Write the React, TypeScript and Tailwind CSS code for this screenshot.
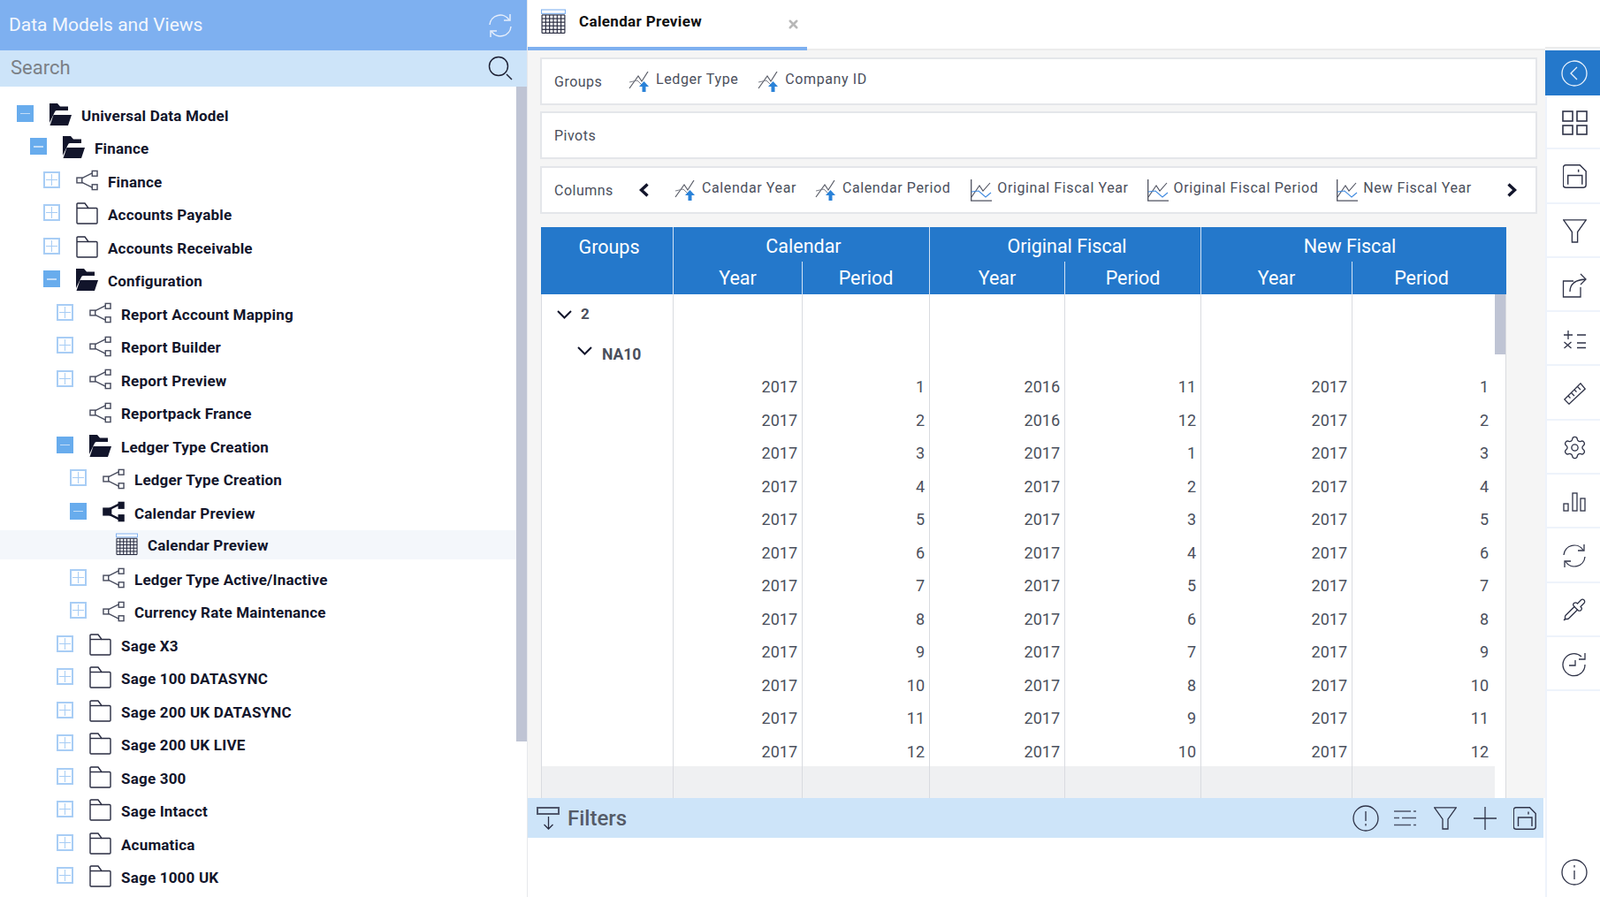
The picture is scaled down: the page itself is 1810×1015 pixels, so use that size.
import { Pipette, Settings, X } from "lucide-react";

type TreeIcon = "open" | "folder" | "share" | "shareSolid" | "grid";
type Toggle = "plus" | "minus" | "none";

type TreeRow = {
  label: string;
  depth: number;
  icon: TreeIcon;
  toggle: Toggle;
  selected?: boolean;
};

const treeRows: TreeRow[] = [
  { label: "Universal Data Model", depth: 0, icon: "open", toggle: "minus" },
  { label: "Finance", depth: 1, icon: "open", toggle: "minus" },
  { label: "Finance", depth: 2, icon: "share", toggle: "plus" },
  { label: "Accounts Payable", depth: 2, icon: "folder", toggle: "plus" },
  { label: "Accounts Receivable", depth: 2, icon: "folder", toggle: "plus" },
  { label: "Configuration", depth: 2, icon: "open", toggle: "minus" },
  { label: "Report Account Mapping", depth: 3, icon: "share", toggle: "plus" },
  { label: "Report Builder", depth: 3, icon: "share", toggle: "plus" },
  { label: "Report Preview", depth: 3, icon: "share", toggle: "plus" },
  { label: "Reportpack France", depth: 3, icon: "share", toggle: "none" },
  { label: "Ledger Type Creation", depth: 3, icon: "open", toggle: "minus" },
  { label: "Ledger Type Creation", depth: 4, icon: "share", toggle: "plus" },
  { label: "Calendar Preview", depth: 4, icon: "shareSolid", toggle: "minus" },
  { label: "Calendar Preview", depth: 5, icon: "grid", toggle: "none", selected: true },
  { label: "Ledger Type Active/Inactive", depth: 4, icon: "share", toggle: "plus" },
  { label: "Currency Rate Maintenance", depth: 4, icon: "share", toggle: "plus" },
  { label: "Sage X3", depth: 3, icon: "folder", toggle: "plus" },
  { label: "Sage 100 DATASYNC", depth: 3, icon: "folder", toggle: "plus" },
  { label: "Sage 200 UK DATASYNC", depth: 3, icon: "folder", toggle: "plus" },
  { label: "Sage 200 UK LIVE", depth: 3, icon: "folder", toggle: "plus" },
  { label: "Sage 300", depth: 3, icon: "folder", toggle: "plus" },
  { label: "Sage Intacct", depth: 3, icon: "folder", toggle: "plus" },
  { label: "Acumatica", depth: 3, icon: "folder", toggle: "plus" },
  { label: "Sage 1000 UK", depth: 3, icon: "folder", toggle: "plus" },
];

const dataRows = [
  [2017, 1, 2016, 11, 2017, 1],
  [2017, 2, 2016, 12, 2017, 2],
  [2017, 3, 2017, 1, 2017, 3],
  [2017, 4, 2017, 2, 2017, 4],
  [2017, 5, 2017, 3, 2017, 5],
  [2017, 6, 2017, 4, 2017, 6],
  [2017, 7, 2017, 5, 2017, 7],
  [2017, 8, 2017, 6, 2017, 8],
  [2017, 9, 2017, 7, 2017, 9],
  [2017, 10, 2017, 8, 2017, 10],
  [2017, 11, 2017, 9, 2017, 11],
  [2017, 12, 2017, 10, 2017, 12],
];

const bodyCols = "grid grid-cols-[149px_146px_144px_153px_154px_171px_161px]";
const cellLine = "border-r border-[#d9dbe0]";

function RefreshIcon({ className, width = 1.3 }: { className?: string; width?: number }) {
  return (
    <svg viewBox="0 0 28 28" fill="none" stroke="currentColor" strokeWidth={width} className={className}>
      <path d="M2 13A12 12 0 0 1 24 7.5" />
      <path d="M25 1v7h-7" />
      <path d="M26 15A12 12 0 0 1 4 20.5" />
      <path d="M3 27v-7h7" />
    </svg>
  );
}

function ShareIcon({ solid }: { solid?: boolean }) {
  return (
    <svg viewBox="0 0 26 24" className="h-[24px] w-[26px]" fill={solid ? "#12152b" : "#fff"} stroke={solid ? "#12152b" : "#4a4e60"} strokeWidth="1.5">
      <path d="M7 9.5 19 3.5M7 14.5 19 20.5" fill="none" strokeWidth={solid ? 2.5 : 1.5} />
      {solid ? (
        <>
          <rect x="1" y="8" width="9" height="8" />
          <rect x="19" y="1" width="6" height="7" />
          <rect x="19" y="16" width="6" height="7" />
        </>
      ) : (
        <>
          <rect x="1" y="9" width="6" height="6" />
          <rect x="19" y="1" width="6" height="6" />
          <rect x="19" y="17" width="6" height="6" />
        </>
      )}
    </svg>
  );
}

function FolderIcon() {
  return (
    <svg viewBox="0 0 25 25" className="h-[25px] w-[25px]" fill="none" stroke="#2a2d42" strokeWidth="1.4">
      <path d="M1 6.5V2a1 1 0 0 1 1-1h8l4 5.5h9a1 1 0 0 1 1 1V23a1 1 0 0 1-1 1H2a1 1 0 0 1-1-1z" />
      <path d="M1 6.5h13" />
    </svg>
  );
}

function OpenFolderIcon() {
  return (
    <svg viewBox="0 0 25 25" className="h-[25px] w-[25px]" fill="#12152b">
      <path d="M0 0h9l3 3.5h9V8H8q-1.5 0-2.2 2L0 22z" />
      <path d="M4.5 13H25l-4 12H.5z" />
    </svg>
  );
}

function GridIcon({ className }: { className: string }) {
  const lines = [];
  for (let i = 0; i <= 6; i++) {
    lines.push(<path key={`v${i}`} d={`M${1 + i * 4} 6V25`} />);
  }
  for (let i = 0; i <= 5; i++) {
    lines.push(<path key={`h${i}`} d={`M1 ${6 + i * 3.8}H25`} />);
  }
  return (
    <svg viewBox="0 0 26 26" className={className} fill="none">
      <rect x="0.5" y="0.5" width="25" height="4" fill="#fff" stroke="#7eb0f0" />
      <g stroke="#2a2d42" strokeWidth="1.1">{lines}</g>
    </svg>
  );
}

function TreeGlyph({ icon }: { icon: TreeIcon }) {
  if (icon === "open") return <OpenFolderIcon />;
  if (icon === "folder") return <FolderIcon />;
  if (icon === "share") return <ShareIcon />;
  if (icon === "shareSolid") return <ShareIcon solid />;
  return <GridIcon className="h-[26px] w-[26px]" />;
}

function ToggleBox({ toggle }: { toggle: Toggle }) {
  if (toggle === "none") return <span className="w-[19px]" />;
  if (toggle === "minus") {
    return (
      <span className="flex h-[19px] w-[19px] -translate-y-[2px] items-center justify-center bg-[#68aced]">
        <span className="h-[1.5px] w-[11px] bg-[#c3ddf7]" />
      </span>
    );
  }
  return (
    <span className="relative flex h-[19px] w-[19px] -translate-y-[2px] items-center justify-center border-2 border-[#a8cdf5] bg-white">
      <span className="h-px w-[13px] bg-[#a8cdf5]" />
      <span className="absolute h-[13px] w-px bg-[#a8cdf5]" />
    </span>
  );
}

function Sidebar() {
  return (
    <aside className="flex w-[597px] shrink-0 flex-col border-r border-[#e6e8ec] bg-white">
      <div className="flex h-[57px] items-center justify-between bg-[#7eb0f0] pl-[10px] pr-[16px]">
        <span className="text-[21px] text-[#f3f7fd]">Data Models and Views</span>
        <RefreshIcon className="h-[28px] w-[28px] text-[#e6eefb]" width={1.5} />
      </div>
      <div className="flex h-[41px] items-center justify-between bg-[#cde4f9] pb-[2px] pl-[12px] pr-[16px]">
        <span className="text-[22px] text-[#7b8086]">Search</span>
        <svg viewBox="0 0 28 28" className="h-[28px] w-[28px]" fill="none" stroke="#1c1f33" strokeWidth="1.4">
          <circle cx="12" cy="12" r="10.5" />
          <path d="M21 21l6 6" />
        </svg>
      </div>
      <div className="flex min-h-0 flex-1">
        <div className="min-w-0 flex-1 overflow-hidden pt-[13.5px]">
          {treeRows.map((row, i) => (
            <div
              key={i}
              className={`flex items-center ${row.selected ? "mb-[3.5px] mt-[1px] h-[33px] bg-[#f4f7fb]" : "h-[37.5px]"}`}
              style={{ paddingLeft: 19 + row.depth * 15 }}
            >
              <ToggleBox toggle={row.toggle} />
              <span className="ml-[18px] flex w-[25px] -translate-y-px items-center justify-center">
                <TreeGlyph icon={row.icon} />
              </span>
              <span className="ml-[11px] translate-y-px whitespace-nowrap text-[17px] font-bold tracking-[0.2px] text-[#12152b]">
                {row.label}
              </span>
            </div>
          ))}
        </div>
        <div className="w-[12px] shrink-0">
          <div className="h-[741px] bg-[#bfc4d4]" />
        </div>
      </div>
    </aside>
  );
}

function ArrowChartIcon() {
  return (
    <svg viewBox="0 0 24 23" className="h-[23px] w-[24px] shrink-0" fill="none">
      <path d="M1 19 11 5l4 6 7-11" stroke="#5a5d68" strokeWidth="1.2" />
      <path d="M1 12l9-2 8 8" stroke="#7d808a" strokeWidth="1" />
      <path d="M17.5 11l5.5 6h-3.5v6h-4v-6H12z" fill="#2a82d8" />
    </svg>
  );
}

function LineChartIcon() {
  return (
    <svg viewBox="0 0 24 25" className="h-[25px] w-[24px] shrink-0" fill="none">
      <path d="M.7 0v24.2H24" stroke="#4f5260" strokeWidth="1.3" />
      <path d="M1 20 10 7l4 6 8-9" stroke="#4f5260" strokeWidth="1.1" />
      <path d="M1 14l8-1 8 7 6-5" stroke="#3f8ae0" strokeWidth="1.1" />
    </svg>
  );
}

function Chip({ label, line }: { label: string; line?: boolean }) {
  return (
    <span className={`flex items-center ${line ? "gap-[6px]" : "gap-[7px]"}`}>
      {line ? <LineChartIcon /> : <ArrowChartIcon />}
      <span className="-translate-y-[2px] whitespace-nowrap text-[16px] tracking-[0.6px] text-[#4b4f5c]">{label}</span>
    </span>
  );
}

function FieldPanel({ label, children, labelClass }: { label: string; children?: React.ReactNode; labelClass?: string }) {
  return (
    <div className="flex h-[54px] items-center border-2 border-[#e4e6ea] bg-white pl-[14px]">
      <span className={`w-[85px] shrink-0 text-[16px] tracking-[0.5px] text-[#4b4f5c] ${labelClass ?? ""}`}>{label}</span>
      {children}
    </div>
  );
}

function Chevron({ left }: { left?: boolean }) {
  return (
    <svg viewBox="0 0 13 16" className="h-[16px] w-[13px] shrink-0" fill="none" stroke="#12152b" strokeWidth="3.4">
      <path d={left ? "M10.5 1.5 3.5 8l7 6.5" : "M2.5 1.5 9.5 8l-7 6.5"} />
    </svg>
  );
}

function HeaderCell({ label, className }: { label: string; className: string }) {
  return (
    <div className={`flex items-center justify-center border-[#d4e3f4] text-[21.5px] text-white ${className}`}>{label}</div>
  );
}

function DataTable() {
  return (
    <div className="ml-[15px] mt-[15px] w-[1092px] [font-family:'Liberation_Sans',Arial,sans-serif]">
      <div className="grid h-[76px] grid-cols-[150px_146px_144px_153px_154px_171px_174px] grid-rows-[39px_37px] bg-[#2478cb]">
        <HeaderCell label="Groups" className="row-span-2 items-start border-r pl-[5px] pt-[7px]" />
        <HeaderCell label="Calendar" className="col-span-2 border-r pl-[5px] pt-[5px]" />
        <HeaderCell label="Original Fiscal" className="col-span-2 border-r pl-[4px] pt-[5px]" />
        <HeaderCell label="New Fiscal" className="col-span-2 pr-[9px] pt-[5px]" />
        <HeaderCell label="Year" className="border-r pt-[2px]" />
        <HeaderCell label="Period" className="border-r pt-[2px]" />
        <HeaderCell label="Year" className="border-r pt-[2px]" />
        <HeaderCell label="Period" className="border-r pt-[2px]" />
        <HeaderCell label="Year" className="border-r pt-[2px]" />
        <HeaderCell label="Period" className="pr-[18px] pt-[2px]" />
      </div>
      <div className="flex h-[570px] overflow-hidden border-x border-[#d9dbe0] bg-white">
        <div className="w-[1078px] shrink-0">
          <div className={`${bodyCols} h-[45px]`}>
            <div className={`${cellLine} flex items-center pl-[17px] text-[17px] font-bold text-[#4a4f5c]`}>
              <svg viewBox="0 0 17 10" className="mr-[10px] h-[10px] w-[17px]" fill="none" stroke="#12152b" strokeWidth="2">
                <path d="M1 1l7.500 7.500L16 1" />
              </svg>
              2
            </div>
            <EmptyCells />
          </div>
          <div className={`${bodyCols} h-[41px]`}>
            <div className={`${cellLine} flex items-center pl-[40px] pt-[6px] text-[17.5px] font-bold text-[#4a4f5c]`}>
              <svg viewBox="0 0 17 10" className="mr-[11px] h-[10px] w-[17px] -translate-y-[5px]" fill="none" stroke="#12152b" strokeWidth="2">
                <path d="M1 1l7.500 7.500L16 1" />
              </svg>
              NA10
            </div>
            <EmptyCells />
          </div>
          {dataRows.map((row, i) => (
            <div key={i} className={`${bodyCols} h-[37.5px]`}>
              <div className={cellLine} />
              {row.map((value, j) => (
                <div
                  key={j}
                  className={`flex items-center justify-end text-[18px] text-[#4a4f5c] ${j === 5 ? "pr-[7px]" : `pr-[5px] ${cellLine}`}`}
                >
                  {value}
                </div>
              ))}
            </div>
          ))}
          <div className={`${bodyCols} relative -mt-[2px] h-[38px] bg-[#eff0f2]`}>
            <div className={cellLine} />
            <EmptyCells />
          </div>
        </div>
        <div className="w-[12px] shrink-0">
          <div className="h-[68px] bg-[#bfc4d4]" />
        </div>
      </div>
    </div>
  );
}

function EmptyCells() {
  return (
    <>
      <div className={cellLine} />
      <div className={cellLine} />
      <div className={cellLine} />
      <div className={cellLine} />
      <div className={cellLine} />
      <div />
    </>
  );
}

function SaveIcon({ className }: { className: string }) {
  return (
    <svg viewBox="0 0 26 26" className={className} fill="none" stroke="#2f3348" strokeWidth="1.4">
      <path d="M3 .8h15.500L25.200 7.500V22.500a2.700 2.700 0 0 1-2.700 2.700h-19.500a2.700 2.700 0 0 1-2.700-2.700v-19a2.700 2.700 0 0 1 2.700-2.700z" />
      <path d="M5.500 22V12h15.500v10M17 5.500v3" />
    </svg>
  );
}

function FunnelIcon({ className }: { className: string }) {
  return (
    <svg viewBox="0 0 26 26" className={className} fill="none" stroke="#2f3348" strokeWidth="1.3">
      <path d="M.7.800h24.600L16 14v11h-6V14z" />
    </svg>
  );
}

function FilterBar() {
  return (
    <div className="mr-[2px] flex h-[45px] items-center justify-between bg-[#cde4f9] pl-[10px] pr-[8px]">
      <div className="flex items-center">
        <svg viewBox="0 0 26 26" className="h-[26px] w-[26px]" fill="none" stroke="#4f566b">
          <rect x="1" y="1" width="24" height="7" strokeWidth="2" />
          <path d="M13.500 11v14M8.500 20l5 5 5-5" stroke="#2a2d42" strokeWidth="1.300" />
        </svg>
        <span className="ml-[9px] text-[24px] font-medium text-[#555b68]">Filters</span>
      </div>
      <div className="flex items-center text-[#2f3348]">
        <svg viewBox="0 0 30 30" className="h-[30px] w-[30px]" fill="none" stroke="currentColor" strokeWidth="1.3">
          <circle cx="15" cy="15" r="14" />
          <path d="M15 7v11M15 21v2.500" />
        </svg>
        <svg viewBox="0 0 25 18" className="ml-[17px] h-[18px] w-[25px]" fill="none" stroke="#4f566b" strokeWidth="1.500">
          <path d="M0 1h19M22 1h3M0 8.500h6M9 8.500h16M0 16.500h19M22 16.500h3" />
        </svg>
        <FunnelIcon className="ml-[20px] h-[26px] w-[26px]" />
        <svg viewBox="0 0 26 26" className="ml-[19px] h-[26px] w-[26px]" fill="none" stroke="currentColor" strokeWidth="1.3">
          <path d="M13 0v26M0 13h26" />
        </svg>
        <SaveIcon className="ml-[19px] h-[26px] w-[26px]" />
      </div>
    </div>
  );
}

function Rail() {
  const stroke = { fill: "none", stroke: "#2f3348", strokeWidth: 1.3 };
  const items = [
    <svg key="apps" viewBox="0 0 29 28" className="h-[28px] w-[29px]" fill="none" stroke="#2f3348" strokeWidth="1.6">
      <rect x="1" y="1" width="11" height="11" />
      <rect x="17" y="1" width="11" height="11" />
      <rect x="1" y="17" width="11" height="10" />
      <rect x="17" y="17" width="11" height="10" />
    </svg>,
    <SaveIcon key="save" className="h-[27px] w-[27px]" />,
    <FunnelIcon key="funnel" className="h-[27px] w-[27px]" />,
    <svg key="share" viewBox="0 0 28 28" className="h-[28px] w-[28px]" {...stroke}>
      <path d="M13 9H1.500V27H21V16" />
      <path d="M9 21c0-9 6-13.500 18-14" />
      <path d="M21 1l6 6-6 6" />
    </svg>,
    <svg key="calc" viewBox="0 0 26 22" className="h-[22px] w-[26px]" {...stroke}>
      <path d="M1 6h10M6 1v10M16 6h10M1.500 14l8 7M9.500 14l-8 7M16 15h10M16 20.500h10" />
    </svg>,
    <svg key="ruler" viewBox="0 0 25 25" className="h-[25px] w-[25px]" {...stroke}>
      <path d="M.8 19 19 .8 24.200 7 6 24.200z" />
      <path d="M5 15l2.500 2.500M8.500 11.500l3.500 3.500M12 8l2.500 2.500M15.500 4.500l3.500 3.500" />
    </svg>,
    <Settings key="gear" size={29} strokeWidth={1.1} color="#2f3348" />,
    <svg key="bars" viewBox="0 0 26 22" className="h-[22px] w-[26px]" {...stroke}>
      <rect x="1" y="13" width="5" height="8" />
      <rect x="11" y="1" width="5" height="20" />
      <rect x="20" y="7" width="5" height="14" />
    </svg>,
    <RefreshIcon key="refresh" className="h-[28px] w-[28px] text-[#2f3348]" />,
    <Pipette key="pipette" size={28} strokeWidth={1.1} color="#2f3348" />,
    <svg key="history" viewBox="0 0 28 28" className="h-[28px] w-[28px]" {...stroke}>
      <path d="M26 14A12.500 12.500 0 1 1 22 5" />
      <path d="M26 1v7h-7" />
      <path d="M15 9v6H8" />
    </svg>,
  ];
  return (
    <aside className="flex w-[62px] shrink-0 flex-col bg-white">
      <div className="h-[55px] border-b-2 border-[#ececec]" />
      <div className="h-[2px]" />
      <div className="flex h-[51px] items-center justify-center bg-[#2478cb] pl-[4px]">
        <svg viewBox="0 0 30 30" className="h-[30px] w-[30px]" fill="none" stroke="#e8f1fb" strokeWidth="1.3">
          <circle cx="15" cy="15" r="14" />
          <path d="M18 8l-7 7 7 7" />
        </svg>
      </div>
      <div className="flex flex-1 flex-col border-l-2 border-[#eef3fb]">
        {items.map((icon, i) => (
          <div key={i} className="flex h-[61.3px] items-center justify-center border-b-2 border-[#eef3fb] pl-[2px] pt-[2px]">
            {icon}
          </div>
        ))}
        <div className="mt-auto flex justify-center pb-[13px] pl-[2px]">
          <svg viewBox="0 0 30 30" className="h-[30px] w-[30px]" fill="none" stroke="#2f3348" strokeWidth="1.3">
            <circle cx="15" cy="15" r="14" />
            <path d="M15 13v10M15 7v2.500" />
          </svg>
        </div>
      </div>
    </aside>
  );
}

export default function App() {
  return (
    <div className="flex h-[1015px] w-[1810px] overflow-hidden bg-white [font-family:Roboto,sans-serif]">
      <Sidebar />
      <main className="flex w-[1151px] shrink-0 flex-col">
        <div className="flex h-[57px] border-b-2 border-[#ececec]">
          <div className="relative -mb-[2px] flex h-[57px] w-[316px] items-center border-b-4 border-[#7eb0f0] pl-[15px]">
            <GridIcon className="h-[29px] w-[28px] -translate-y-[2px]" />
            <span className="ml-[15px] -translate-y-[2px] text-[17px] font-bold tracking-[0.35px] text-[#101010]">Calendar Preview</span>
            <X size={15} strokeWidth={4} color="#b7b7b7" className="absolute left-[293px] top-[20px]" />
          </div>
        </div>
        <div className="flex-1 overflow-hidden bg-[#f5f5f5]">
          <div className="ml-[14px] mt-[8px] flex w-[1128px] flex-col">
            <FieldPanel label="Groups" labelClass="translate-y-px">
              <div className="-ml-px flex items-center gap-[22px]">
                <Chip label="Ledger Type" />
                <Chip label="Company ID" />
              </div>
            </FieldPanel>
            <div className="mt-[7px]">
              <FieldPanel label="Pivots" labelClass="translate-y-px" />
            </div>
            <div className="mt-[8px]">
              <FieldPanel label="Columns" labelClass="translate-y-px">
                <div className="flex flex-1 items-center">
                  <span className="ml-[10px]">
                    <Chevron left />
                  </span>
                  <div className="ml-[28px] flex items-center gap-[21px]">
                    <Chip label="Calendar Year" />
                    <span className="mr-[2px]">
                      <Chip label="Calendar Period" />
                    </span>
                    <Chip label="Original Fiscal Year" line />
                    <Chip label="Original Fiscal Period" line />
                    <Chip label="New Fiscal Year" line />
                  </div>
                  <span className="ml-auto mr-[20px]">
                    <Chevron />
                  </span>
                </div>
              </FieldPanel>
            </div>
          </div>
          <DataTable />
        </div>
        <FilterBar />
        <div className="h-[67px]" />
      </main>
      <Rail />
    </div>
  );
}
